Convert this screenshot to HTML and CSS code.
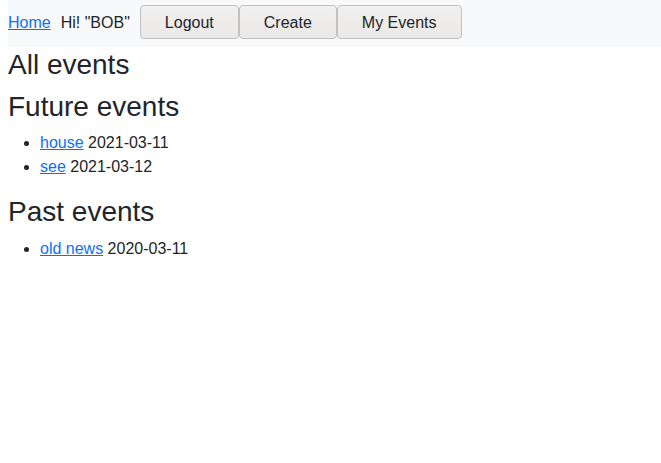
FILE: index.html
```html
<!DOCTYPE html>
<html lang="en">
<head>
<meta charset="utf-8">
<title>Events</title>
<link rel="stylesheet" href="styles.css">
</head>
<body>
<nav class="topnav">
  <a class="nav-link" href="#">Home</a>
  <span class="greeting">Hi! "BOB"</span>
  <div class="btn-group">
    <button class="btn" type="button">Logout</button>
    <button class="btn" type="button">Create</button>
    <button class="btn" type="button">My Events</button>
  </div>
</nav>
<main class="content">
  <h2 class="title">All events</h2>
  <h2 class="title">Future events</h2>
  <ul class="events">
    <li><a href="#">house</a> 2021-03-11</li>
    <li><a href="#">see</a> 2021-03-12</li>
  </ul>
  <h2 class="title">Past events</h2>
  <ul class="events">
    <li><a href="#">old news</a> 2020-03-11</li>
  </ul>
</main>
</body>
</html>
```
FILE: styles.css
```css
* { box-sizing: border-box; }
html, body { height: 100%; }
body {
  margin: 0 0 0 8px;
  font-family: "Liberation Sans", Arial, sans-serif;
  font-size: 16px;
  line-height: 1.5;
  color: #212529;
  background: #fff;
}
a { color: #0d6efd; text-decoration: underline; }
.topnav {
  display: flex;
  align-items: baseline;
  gap: 10px;
  background: #f8f9fa;
  padding: 5px 0 8px 0;
}
.btn-group { display: flex; align-items: baseline; }
.btn {
  font-family: "Liberation Sans", Arial, sans-serif;
  font-size: 16px;
  line-height: normal;
  color: #212529;
  padding: 8px 24px 6px 24px;
  border: 1px solid #c4c0bb;
  border-radius: 4px;
  background: linear-gradient(#f1f0ee, #eae9e7);
  margin: 0;
}
.content { padding-top: 1px; }
.title {
  font-size: 28px;
  font-weight: 400;
  line-height: 1.2;
  margin: 0 0 8px 0;
}
.events {
  margin: 0 0 16px 0;
  padding-left: 32px;
}
```
